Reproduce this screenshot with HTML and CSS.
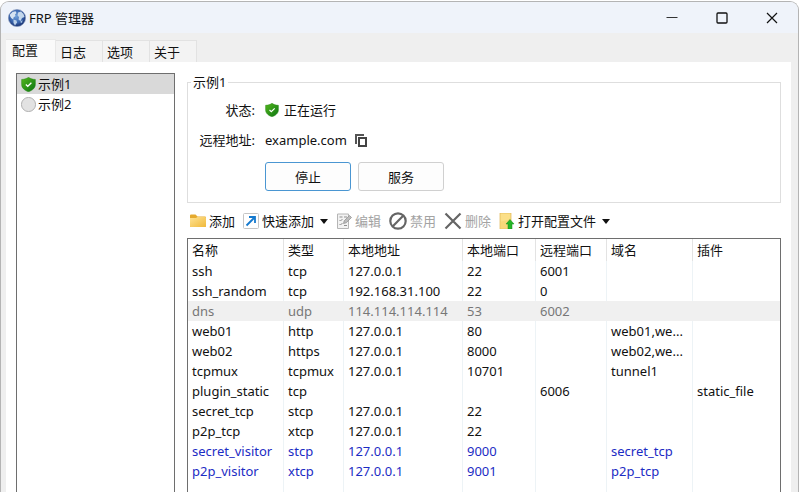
FILE: index.html
```html
<!DOCTYPE html>
<html lang="zh-CN">
<head>
<meta charset="utf-8">
<title>FRP 管理器</title>
<link rel="stylesheet" href="styles.css">
</head>
<body>
<svg width="0" height="0" class="defs" aria-hidden="true">
  <defs>
    <linearGradient id="green" x1="0" y1="0" x2="1" y2="1"><stop offset="0" stop-color="#55b81c"/><stop offset="1" stop-color="#0a7413"/></linearGradient>
    <radialGradient id="blue" cx=".45" cy=".4" r=".6"><stop offset="0" stop-color="#6f9fd8"/><stop offset=".6" stop-color="#3c68b0"/><stop offset="1" stop-color="#18306f"/></radialGradient>
    <linearGradient id="gold" x1="0" y1="0" x2="1" y2="1"><stop offset="0" stop-color="#ffe394"/><stop offset="1" stop-color="#f0b93a"/></linearGradient>
    <symbol id="shield" viewBox="0 0 14 14">
      <path d="M7 .3C5.200 1.600 3 2.300.6 2.300V7c0 3.200 2.800 5.500 6.400 6.800C10.600 12.500 13.400 10.200 13.400 7V2.300C11 2.300 8.800 1.600 7 .3Z" fill="url(#green)" stroke="#2a8a1c" stroke-width=".5"/>
      <path d="M4.500 7l1.800 1.700L9.700 5.300" fill="none" stroke="#fff" stroke-width="1.200"/>
    </symbol>
  </defs>
</svg>
<div class="window">
  <header class="titlebar">
    <svg class="logo" viewBox="0 0 18 18" aria-hidden="true">
      <circle cx="9" cy="9" r="8.600" fill="url(#blue)" stroke="#7f93bb" stroke-width=".6"/>
      <path d="M2 5.500L4.500 3 7.500 2.200 8.500 4 7 5.500 7.500 7 5.500 8.500 5.200 10.500 3.200 9 2 7Z" fill="#d5e3f1"/>
      <path d="M10 3.500l3-1 2.500 2.500 1 3-2.500 1-1.500 3-2-1.500.5-2.500-1.500-1.500Z" fill="#c3d7ec"/>
      <path d="M5.500 10.500l3 1 .5 2-2 3-1.500-2.500Z" fill="#b9cfe8"/>
      <path d="M12 13l2.500-2-.5 3Z" fill="#a8c4e4"/>
    </svg>
    <h1>FRP 管理器</h1>
    <div class="caption">
      <button type="button" aria-label="最小化"><svg viewBox="0 0 12 12"><path d="M.5 5.500h11" stroke="#333"/></svg></button>
      <button type="button" aria-label="最大化"><svg viewBox="0 0 12 12"><rect x="1" y="1" width="10" height="10" rx="1" fill="none" stroke="#111" stroke-width="1.300"/></svg></button>
      <button type="button" aria-label="关闭"><svg viewBox="0 0 12 12"><path d="M1 1l10 10M11 1L1 11" stroke="#111" stroke-width="1.200"/></svg></button>
    </div>
  </header>
  <nav class="tabs" role="tablist">
    <button type="button" class="tab active" role="tab" aria-selected="true">配置</button>
    <button type="button" class="tab" role="tab">日志</button>
    <button type="button" class="tab" role="tab">选项</button>
    <button type="button" class="tab" role="tab">关于</button>
  </nav>
  <main class="page">
    <ul class="configs">
      <li class="selected"><svg class="state" aria-hidden="true"><use href="#shield"/></svg>示例1</li>
      <li><svg class="state" viewBox="0 0 14 14" aria-hidden="true"><circle cx="7" cy="7" r="6.600" fill="#e2e2e2" stroke="#a6a6a6" stroke-width=".8"/></svg>示例2</li>
    </ul>
    <section class="detail">
      <fieldset class="status">
        <legend>示例1</legend>
        <dl>
          <dt>状态:</dt>
          <dd><svg class="icon14" aria-hidden="true"><use href="#shield"/></svg><span>正在运行</span></dd>
          <dt>远程地址:</dt>
          <dd class="address"><span>example.com</span>
            <button type="button" class="copy" aria-label="复制"><svg viewBox="0 0 12 13"><path d="M1 10V1h8" fill="none" stroke="#555" stroke-width="2"/><rect x="4" y="4" width="7" height="8" fill="#fff" stroke="#444" stroke-width="2"/></svg></button></dd>
        </dl>
        <div class="actions">
          <button type="button" class="push default">停止</button>
          <button type="button" class="push">服务</button>
        </div>
      </fieldset>
      <div class="toolbar" role="toolbar">
        <button type="button"><svg viewBox="0 0 16 16"><path d="M0 2.500q0-1 1-1h4.500l2 2H15q1 0 1 1V13q0 1-1 1H1q-1 0-1-1Z" fill="#e5aa2e"/><path d="M0 5h6l1.500-1H15q1 0 1 1v8q0 1-1 1H1q-1 0-1-1Z" fill="url(#gold)"/></svg>添加</button>
        <button type="button"><svg viewBox="0 0 16 16"><rect x=".5" y=".5" width="15" height="15" rx="1" fill="#fff" stroke="#c5c5c5"/><path d="M3.500 12.500L11.500 4.500M6 4h6v6" fill="none" stroke="#1479ce" stroke-width="1.800"/></svg>快速添加<i class="arrow"></i></button>
        <button type="button" disabled><svg viewBox="0 0 16 16"><path d="M1.500 1h11v14.500h-11z" fill="#f2f2f2" stroke="#b5b5b5"/><path d="M3.500 4h3M3.500 7l1 1L6.500 6M3.500 11l1 1L6.500 10M8 4h3M8 12.500h3" fill="none" stroke="#8f8f8f"/><path d="M7.500 10.500L8.200 7.800 13.500 2.500 15.500 4.500 10.200 9.800Z" fill="#bcbcbc" stroke="#8c8c8c" stroke-width=".7"/></svg>编辑</button>
        <button type="button" disabled><svg class="large" viewBox="0 0 18 18"><circle cx="9" cy="9" r="7.700" fill="none" stroke="#656565" stroke-width="2.200"/><path d="M3.800 14.200L14.200 3.800" stroke="#656565" stroke-width="2.200"/></svg>禁用</button>
        <button type="button" disabled class="delete"><svg class="large" viewBox="0 0 18 18"><path d="M1.500 1.500l15 15M16.500 1.500l-15 15" stroke="#656565" stroke-width="2.200"/></svg>删除</button>
        <button type="button" class="open"><svg viewBox="0 0 16 16"><path d="M1 0h11v16H1z" fill="#fbdf88" stroke="#dfb552" stroke-width=".7"/><path d="M1 9v7h11V4l-3 3Z" fill="#f7d16a" opacity=".5"/><path d="M11 6.500l4 4.500h-2v5h-4v-5H7Z" fill="#25b526" stroke="#188c1c" stroke-width=".5"/></svg>打开配置文件<i class="arrow"></i></button>
      </div>
      <div class="grid">
        <table>
          <colgroup><col class="name"><col class="type"><col class="host"><col class="port"><col class="remote"><col class="domain"><col></colgroup>
          <thead><tr><th>名称</th><th>类型</th><th>本地地址</th><th>本地端口</th><th>远程端口</th><th>域名</th><th>插件</th></tr></thead>
          <tbody>
            <tr><td>ssh</td><td>tcp</td><td>127.0.0.1</td><td>22</td><td>6001</td><td></td><td></td></tr>
            <tr><td>ssh_random</td><td>tcp</td><td>192.168.31.100</td><td>22</td><td>0</td><td></td><td></td></tr>
            <tr class="off"><td>dns</td><td>udp</td><td>114.114.114.114</td><td>53</td><td>6002</td><td></td><td></td></tr>
            <tr><td>web01</td><td>http</td><td>127.0.0.1</td><td>80</td><td></td><td>web01,we...</td><td></td></tr>
            <tr><td>web02</td><td>https</td><td>127.0.0.1</td><td>8000</td><td></td><td>web02,we...</td><td></td></tr>
            <tr><td>tcpmux</td><td>tcpmux</td><td>127.0.0.1</td><td>10701</td><td></td><td>tunnel1</td><td></td></tr>
            <tr><td>plugin_static</td><td>tcp</td><td></td><td></td><td>6006</td><td></td><td>static_file</td></tr>
            <tr><td>secret_tcp</td><td>stcp</td><td>127.0.0.1</td><td>22</td><td></td><td></td><td></td></tr>
            <tr><td>p2p_tcp</td><td>xtcp</td><td>127.0.0.1</td><td>22</td><td></td><td></td><td></td></tr>
            <tr class="visitor"><td>secret_visitor</td><td>stcp</td><td>127.0.0.1</td><td>9000</td><td></td><td>secret_tcp</td><td></td></tr>
            <tr class="visitor"><td>p2p_visitor</td><td>xtcp</td><td>127.0.0.1</td><td>9001</td><td></td><td>p2p_tcp</td><td></td></tr>
            <tr class="filler"><td></td><td></td><td></td><td></td><td></td><td></td><td></td></tr>
          </tbody>
        </table>
      </div>
    </section>
  </main>
</div>
</body>
</html>
```
FILE: styles.css
```css
* { box-sizing: border-box; }

html, body { height: 100%; }

body {
  margin: 0;
  padding: 1px 3px 0 0;
  overflow: hidden;
  background: #fff;
  color: #111;
  font: 13px/20px "Noto Sans", "Noto Sans CJK SC", sans-serif;
}

.defs { position: absolute; }

button {
  margin: 0;
  padding: 0;
  border: 0;
  background: none;
  color: inherit;
  font: inherit;
}

.window {
  display: flex;
  flex-direction: column;
  height: 100%;
  border: 1px solid #b4b4b4;
  border-bottom: 0;
  border-radius: 9px 9px 0 0;
  background: #efefef;
  overflow: hidden;
}

.titlebar {
  display: flex;
  align-items: center;
  flex: none;
  height: 31px;
  padding-left: 7px;
  background: #eff3fa;
}

.logo { width: 18px; height: 18px; margin-right: 3px; }

h1 { flex: 1; margin: 0; font-size: 13px; font-weight: 400; }

.caption { display: flex; padding-right: 1px; }

.caption button {
  display: grid;
  place-items: center;
  width: 50px;
  height: 28px;
}

.caption svg { width: 12px; height: 12px; }

.tabs {
  display: flex;
  align-items: flex-end;
  flex: none;
  height: 29px;
  padding-left: 5px;
}

.tab {
  width: 47px;
  height: 22px;
  padding-left: 4px;
  border: 1px solid #e2e2e2;
  border-width: 1px 1px 0 0;
  background: #f3f3f3;
  text-align: left;
}

.tab.active {
  width: 50px;
  height: 23px;
  padding: 0 0 2px 6px;
  border-color: #e8e8e8;
  background: #fafafa;
}

.page {
  display: flex;
  flex: 1;
  gap: 12px;
  min-height: 0;
  margin: 0 7px 0 5px;
  padding: 10px 10px 0;
  background: #fff;
}

.configs {
  flex: none;
  width: 159px;
  margin: 1px 0 0;
  padding: 0;
  border: 1px solid #6e6e6e;
  border-bottom: 0;
  list-style: none;
}

.configs li {
  display: flex;
  align-items: center;
  gap: 2px;
  height: 20px;
  padding-left: 4px;
}

.configs .selected { background: #d9d9d9; }

.state { width: 15px; height: 15px; }

.detail {
  display: flex;
  flex: 1;
  flex-direction: column;
  min-width: 0;
}

.status {
  flex: none;
  margin: 0;
  padding: 8px 0 11px 7px;
  border: 1px solid #dedede;
}

.status legend { margin-left: -4px; padding: 0 2px; }

dl {
  display: grid;
  grid-template-columns: 60px 1fr;
  gap: 10px;
  margin: 0;
}

dt { text-align: right; }

dd { display: flex; align-items: center; gap: 5px; margin: 0; }

.address { gap: 8px; }

.icon14 { width: 14px; height: 14px; }

.copy svg { display: block; width: 12px; height: 13px; }

.actions { display: flex; gap: 7px; padding: 12px 0 0 70px; }

.push {
  width: 86px;
  height: 29px;
  border: 1px solid #d0d0d0;
  border-radius: 3px;
  background: #fdfdfd;
}

.push.default { border-color: #4a96d2; }

.toolbar {
  display: flex;
  align-items: center;
  flex: none;
  gap: 8px;
  height: 35px;
  padding: 1px 0 0 3px;
}

.toolbar button { display: flex; align-items: center; gap: 3px; white-space: nowrap; }

.toolbar button:disabled { color: #a3a3a3; }

.toolbar svg { width: 16px; height: 16px; }

.toolbar .large { width: 18px; height: 18px; }

.arrow {
  margin-left: 3px;
  border: 4px solid transparent;
  border-top: 5px solid #111;
  border-bottom: 0;
}

.grid {
  flex: 1;
  min-height: 0;
  overflow: hidden;
  border: 1px solid #6e6e6e;
  border-bottom: 0;
}

table {
  width: 100%;
  border-spacing: 0;
  table-layout: fixed;
}

.name { width: 96px; }
.type { width: 60px; }
.host { width: 119px; }
.port { width: 73px; }
.remote { width: 71px; }
.domain { width: 86px; }

th, td {
  height: 20px;
  padding: 0 0 0 4px;
  border-right: 1px solid #edf3f6;
  font-weight: 400;
  text-align: left;
  white-space: nowrap;
}

th { height: 22px; border-color: #e3e3e3; }

th:last-child, td:last-child { border-right: 0; }

.off { background: #f0f0f0; color: #777; }

.off td { border-color: #f0f0f0; }

.visitor { color: #1c2cc4; }

.filler td { height: 100px; }
```
